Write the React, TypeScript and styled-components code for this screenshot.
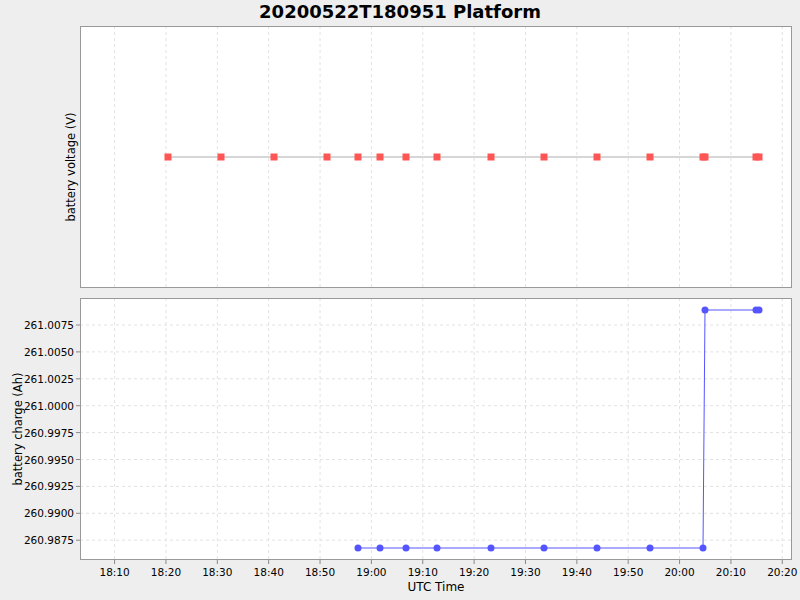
import React from 'react';
import styled, { createGlobalStyle } from 'styled-components';

const Global = createGlobalStyle`
  body { margin: 0; background: #eeeeee; font-family: "DejaVu Sans", sans-serif; }
`;

const Page = styled.div`
  width: 800px;
  height: 600px;
  display: flex;
  flex-direction: column;
  background: #eeeeee;
`;

const Title = styled.div`
  height: 26px;
  text-align: center;
  font-size: 18px;
  font-weight: bold;
  line-height: 24px;
  color: #000;
`;

const Row = styled.div<{ $h: number }>`
  display: flex;
  height: ${(p) => p.$h}px;
`;

const Gap = styled.div`
  height: 10px;
`;

const XLabel = styled.div`
  padding-left: 80px;
  width: 712px;
  text-align: center;
  font-size: 12px;
  color: #000;
`;

const PLOT_W = 712;
const PLOT_H = 262;
const xOf = (min: number) => 34.6 + min * 5.136; // minutes after 18:10
const gridX = Array.from({ length: 14 }, (_, i) => xOf(i * 10));
const ticks = ['18:10', '18:20', '18:30', '18:40', '18:50', '19:00', '19:10', '19:20', '19:30', '19:40', '19:50', '20:00', '20:10', '20:20'];

const topPts = [88, 141, 194, 247, 278, 300, 326, 357, 411, 464, 517, 570, 623, 625, 676, 679];
const lowPts = [278, 300, 326, 357, 411, 464, 517, 570, 623];
const highPts = [625, 676, 679];

const yVals = ['261.0075', '261.0050', '261.0025', '261.0000', '260.9975', '260.9950', '260.9925', '260.9900', '260.9875'];
const yOf = (i: number) => 27 + i * 26.9;

const VGrid = () => (
  <>
    {gridX.map((x) => (
      <line key={x} x1={x} x2={x} y1={0} y2={PLOT_H} stroke="#e2e2e2" strokeDasharray="3 3" />
    ))}
  </>
);

const Frame = () => (
  <rect x={0.5} y={0.5} width={PLOT_W - 1} height={PLOT_H - 1} fill="none" stroke="#999" />
);

const VoltageChart = () => (
  <svg width={800} height={PLOT_H} style={{ display: 'block' }}>
    <text transform="rotate(-90)" x={-141} y={75} textAnchor="middle" fontSize={11.5} fontFamily="DejaVu Sans">
      battery voltage (V)
    </text>
    <g transform="translate(80,0)">
      <rect width={PLOT_W} height={PLOT_H} fill="#fff" />
      <VGrid />
      <polyline points={topPts.map((x) => `${x},131`).join(' ')} fill="none" stroke="#999" strokeWidth={0.8} />
      {topPts.map((x, i) => (
        <rect key={i} x={x - 3.5} y={127.5} width={7} height={7} fill="#ff5555" />
      ))}
      <Frame />
    </g>
  </svg>
);

const ChargeChart = () => (
  <svg width={800} height={PLOT_H + 20} style={{ display: 'block' }}>
    <text transform="rotate(-90)" x={-131} y={22} textAnchor="middle" fontSize={11.5} fontFamily="DejaVu Sans">
      battery charge (Ah)
    </text>
    {yVals.map((v, i) => (
      <g key={v}>
        <text x={74} y={yOf(i) + 4} textAnchor="end" fontSize={10.5} fontFamily="DejaVu Sans">{v}</text>
        <line x1={76} x2={80} y1={yOf(i)} y2={yOf(i)} stroke="#888" />
      </g>
    ))}
    <g transform="translate(80,0)">
      <rect width={PLOT_W} height={PLOT_H} fill="#fff" />
      <VGrid />
      {yVals.map((v, i) => (
        <line key={v} x1={0} x2={PLOT_W} y1={yOf(i)} y2={yOf(i)} stroke="#e2e2e2" strokeDasharray="3 3" />
      ))}
      <polyline
        points={[...lowPts.map((x) => `${x},250`), ...highPts.map((x) => `${x},12`)].join(' ')}
        fill="none"
        stroke="#5555ff"
        strokeWidth={1}
      />
      {lowPts.map((x, i) => (
        <circle key={`l${i}`} cx={x} cy={250} r={3.5} fill="#5555ff" />
      ))}
      {highPts.map((x, i) => (
        <circle key={`h${i}`} cx={x} cy={12} r={3.5} fill="#5555ff" />
      ))}
      <Frame />
      {gridX.map((x, i) => (
        <g key={i}>
          <line x1={x} x2={x} y1={PLOT_H} y2={PLOT_H + 4} stroke="#888" />
          <text x={x} y={PLOT_H + 16} textAnchor="middle" fontSize={10.5} fontFamily="DejaVu Sans">{ticks[i]}</text>
        </g>
      ))}
    </g>
  </svg>
);

export default function App() {
  return (
    <Page>
      <Global />
      <Title>20200522T180951 Platform</Title>
      <Row $h={PLOT_H}>
        <VoltageChart />
      </Row>
      <Gap />
      <Row $h={PLOT_H + 20}>
        <ChargeChart />
      </Row>
      <XLabel>UTC Time</XLabel>
    </Page>
  );
}
